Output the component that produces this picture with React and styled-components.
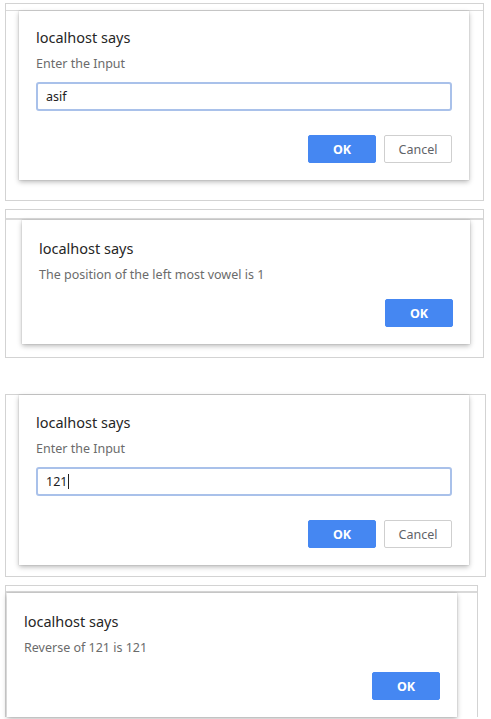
import React from 'react'
import styled, { createGlobalStyle } from 'styled-components'

const GlobalStyle = createGlobalStyle`
    html, body {
        margin: 0;
        background: #ffffff;
    }
    body {
        font-family: "Noto Sans", "Open Sans", Arial, sans-serif;
    }
`
const Page = styled.div`
    display: flex;
    flex-direction: column;
    align-items: flex-start;
    padding: 3px 0 0 5px;
    height: 719px;
    overflow: hidden;
    box-sizing: border-box;
`
const Shot = styled.div`
    width: ${props => props.$width}px;
    box-sizing: border-box;
    border: 1px solid #d3d3d3;
    border-bottom-width: ${props => (props.$open ? 0 : 1)}px;
    padding-bottom: ${props => props.$bottom}px;
    margin-bottom: ${props => props.$gap}px;
    flex-shrink: 0;
`
const Chrome = styled.div`
    height: ${props => props.$height}px;
    border-bottom: ${props => props.$line}px solid #d9d9d9;
`
const Dialog = styled.div`
    width: ${props => props.$width}px;
    margin-left: ${props => props.$inset}px;
    box-sizing: border-box;
    padding: ${props => props.$top}px 17px 17px 17px;
    background: #ffffff;
    box-shadow: 0 2px 5px rgba(0, 0, 0, 0.28), 0 0 1px rgba(0, 0, 0, 0.25);
`
const Title = styled.div`
    font-size: 14.5px;
    line-height: 20px;
    color: #262626;
`
const Message = styled.div`
    margin-top: 8px;
    font-size: 12.5px;
    line-height: 18px;
    color: #6b6b6b;
`
const Field = styled.div`
    margin-top: 9px;
    height: 29px;
    box-sizing: border-box;
    border: 2px solid #a9c1ea;
    border-radius: 3px;
    padding: 0 8px;
    display: flex;
    align-items: center;
    font-size: 12.5px;
    color: #222222;
`
const Caret = styled.span`
    display: inline-block;
    width: 1px;
    height: 15px;
    margin-left: 1px;
    background: #222222;
`
const Actions = styled.div`
    display: flex;
    justify-content: flex-end;
    gap: 8px;
    margin-top: ${props => props.$gap}px;
`
const Button = styled.div`
    width: 68px;
    height: 28px;
    box-sizing: border-box;
    border-radius: 2px;
    display: flex;
    align-items: center;
    justify-content: center;
    font-size: 12.5px;
    font-weight: ${props => (props.$primary ? 700 : 400)};
    color: ${props => (props.$primary ? '#ffffff' : '#5f6368')};
    background: ${props => (props.$primary ? '#4587f2' : '#ffffff')};
    border: 1px solid ${props => (props.$primary ? '#4587f2' : '#cfcfcf')};
`

const AlertBox = ({ message, dialogWidth, inset, top }) => (
    <Dialog $width={dialogWidth} $inset={inset} $top={top}>
        <Title>localhost says</Title>
        <Message>{message}</Message>
        <Actions $gap={15}>
            <Button $primary>OK</Button>
        </Actions>
    </Dialog>
)

const PromptBox = ({ value, caret, inset, top }) => (
    <Dialog $width={450} $inset={inset} $top={top}>
        <Title>localhost says</Title>
        <Message>Enter the Input</Message>
        <Field>
            {value}
            {caret && <Caret />}
        </Field>
        <Actions $gap={24}>
            <Button $primary>OK</Button>
            <Button>Cancel</Button>
        </Actions>
    </Dialog>
)

const App = () => (
    <>
        <GlobalStyle />
        <Page>
            <Shot $width={479} $bottom={20} $gap={8}>
                <Chrome $height={6} $line={1} />
                <PromptBox value="asif" inset={13} top={16} />
            </Shot>
            <Shot $width={479} $bottom={13} $gap={36}>
                <Chrome $height={8} $line={2} />
                <AlertBox
                    message="The position of the left most vowel is 1"
                    dialogWidth={448}
                    inset={16}
                    top={18}
                />
            </Shot>
            <Shot $width={481} $bottom={11} $gap={8}>
                <PromptBox value="121" caret inset={13} top={17} />
            </Shot>
            <Shot $width={473} $bottom={0} $gap={0} $open>
                <Chrome $height={5} $line={2} />
                <AlertBox
                    message="Reverse of 121 is 121"
                    dialogWidth={450}
                    inset={1}
                    top={18}
                />
            </Shot>
        </Page>
    </>
)

export default App
